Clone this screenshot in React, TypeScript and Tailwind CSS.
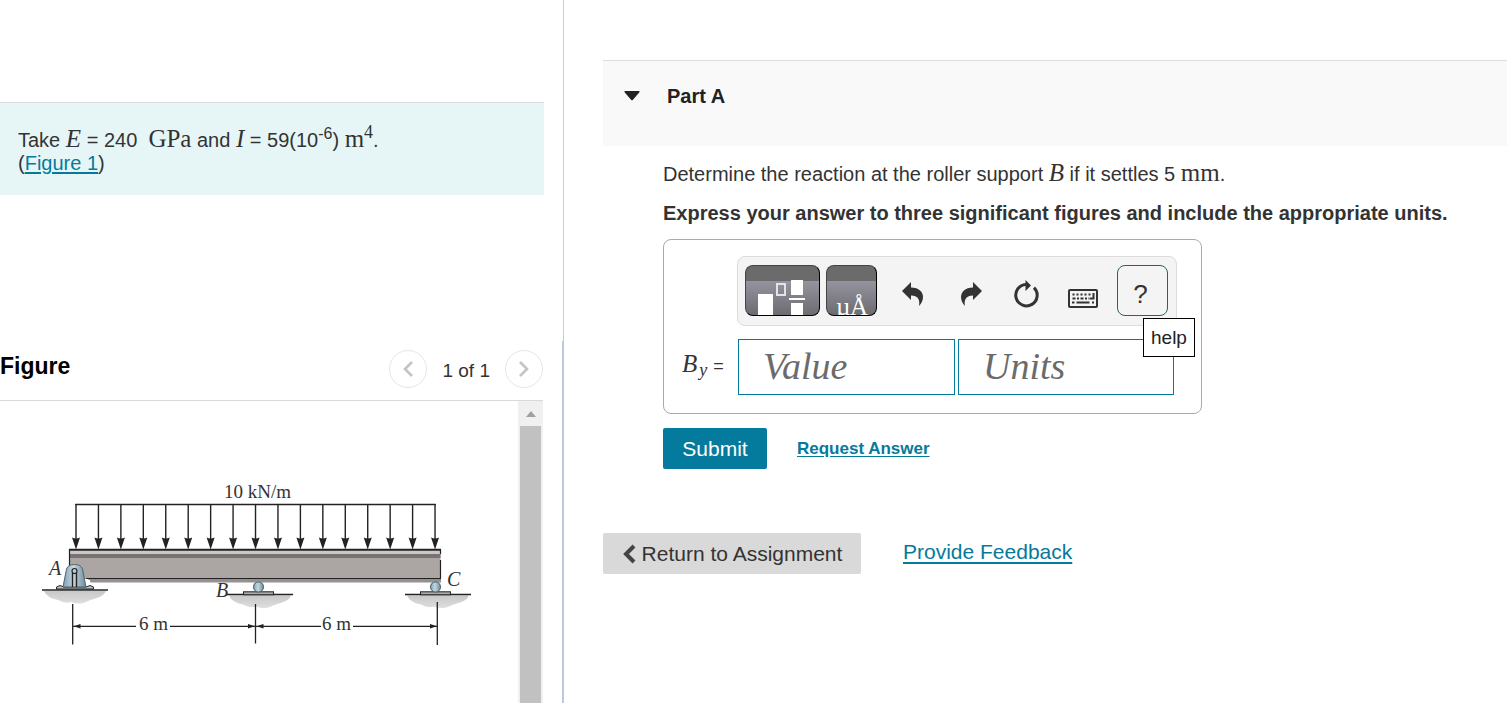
import type { ReactNode } from 'react';

const ARROWS = Array.from({ length: 17 }, (_, i) => 76 + i * 22.44);

function MathText({ children, italic = false }: { children: ReactNode; italic?: boolean }) {
  return (
    <span className={`font-['Liberation_Serif',serif] text-[25px] leading-none text-[#333] ${italic ? 'italic' : ''}`}>
      {children}
    </span>
  );
}

function Ground({ x, y }: { x: number; y: number }) {
  return (
    <g transform={`translate(${x} ${y})`}>
      <path d="M-31 1 L31 1 Q29 6 22 8 Q15 10 11 12 Q4 15 -4 12 Q-10 14 -17 10 Q-28 8 -31 1Z" fill="url(#soil)" />
      <path d="M-33 0H33" stroke="#222" strokeWidth="1.5" />
    </g>
  );
}

function Roller({ x }: { x: number }) {
  return (
    <g transform={`translate(${x} 587)`}>
      <rect x="-15" y="4.8" width="30" height="3" fill="#aaa" stroke="#222" />
      <rect x="-5" y="-5" width="10" height="9" rx="3" fill="#9fb8c6" />
      <circle r="5" fill="url(#steel)" stroke="#4f6470" />
    </g>
  );
}

function BeamFigure() {
  return (
    <svg
      viewBox="0 401 518 302"
      className="block h-[302px] w-[518px] shrink-0"
      role="img"
      aria-label="Beam ABC with a distributed load"
      fontFamily="'Liberation Serif', serif"
      fontSize="19"
      fill="#333"
    >
      <defs>
        <linearGradient id="steel" x1="0" x2="1">
          <stop offset="0" stopColor="#7f9fb2" />
          <stop offset=".45" stopColor="#c5d7e1" />
          <stop offset="1" stopColor="#6f8b9b" />
        </linearGradient>
        <linearGradient id="soil" x1="0" x2="0" y1="0" y2="1">
          <stop offset="0" stopColor="#c8c8c8" />
          <stop offset="1" stopColor="#dedede" />
        </linearGradient>
      </defs>

      {/* distributed load */}
      <text x="224" y="498">10 kN/m</text>
      <path d="M75.3 504.5H435.7" stroke="#222" strokeWidth="1.6" />
      {ARROWS.map(x => (
        <g key={x}>
          <path d={`M${x} 504V540`} stroke="#222" strokeWidth="1.4" />
          <path d={`M${x - 4} 537.5 Q${x} 539.5 ${x + 4} 537.5 L${x} 549.5Z`} fill="#222" />
        </g>
      ))}

      {/* beam */}
      <rect x="69.5" y="550" width="371" height="29" fill="#aba5a4" />
      <rect x="69.5" y="550" width="371" height="4" fill="#cdc6c6" />
      <rect x="69.5" y="554" width="371" height="4" fill="#787373" />
      <rect x="90" y="580" width="351" height="2.5" fill="#969191" />
      <path d="M69 549.8H441" stroke="#222" strokeWidth="2" />
      <path d="M86 578.8H441" stroke="#222" strokeWidth="1.6" />
      <path d="M69.5 549V566M440.5 549V554M440.5 560V579" stroke="#222" strokeWidth="1.2" />

      {/* supports */}
      <Ground x={75} y={590} />
      <Ground x={260} y={594.5} />
      <Ground x={438} y={594.5} />
      <path d="M84 579H88L94 587H86Z" fill="#fff" />
      <path d="M56.5 589V587L60 585.5L64 587H86L90 585.5L93.5 587V589Z" fill="#b9c5cb" stroke="#222" />
      <path d="M63 587 L66.5 569 Q68 564.5 74.5 564.5 Q81 564.5 82.5 569 L86 587Z" fill="url(#steel)" stroke="#4f6470" />
      <path d="M72.5 587V573M76.5 587V573" stroke="#222" strokeWidth="1.4" />
      <circle cx="74.5" cy="571" r="2.5" fill="#b7cbd6" stroke="#222" strokeWidth="1.2" />
      <Roller x={258.5} />
      <Roller x={435.5} />
      <g fontStyle="italic" fontSize="20">
        <text x="49" y="575">A</text>
        <text x="216" y="597">B</text>
        <text x="447" y="586">C</text>
      </g>

      {/* dimensions */}
      <path d="M72.7 604V644.5M255.5 604V643.5M437.3 602V645" stroke="#222" strokeWidth="1.3" />
      <path d="M73 626.3H136M170 626.3H255M256 626.3H321M353 626.3H437" stroke="#222" strokeWidth="1.2" />
      <path
        d="M73.5 626.3l7-2.2v4.4zM255 626.3l-7-2.2v4.4zM256.5 626.3l7-2.2v4.4zM437 626.3l-7-2.2v4.4z"
        fill="#222"
      />
      <text x="139" y="630">6 m</text>
      <text x="322" y="630">6 m</text>
    </svg>
  );
}

function PagerButton({ label, d }: { label: string; d: string }) {
  return (
    <button aria-label={label} className="flex size-[38px] items-center justify-center rounded-full border border-[#e6e6e6]">
      <svg width="12" height="18" viewBox="0 0 12 18" fill="none" stroke="#c4c4c4" strokeWidth="2.6">
        <path d={d} />
      </svg>
    </button>
  );
}

function ProblemPane() {
  return (
    <div className="flex flex-col">
      <section className="h-[341px] border-r border-[#c3cedb] pt-[102px] pr-[19px]">
        <div className="border-t border-[#d6dbdb] bg-[#e6f6f7] pt-[23px] pb-5 pl-[18px] text-[#333]">
          <p className="leading-[23px]">
            Take <MathText italic>E</MathText> = 240&nbsp; <MathText>GPa</MathText> and <MathText italic>I</MathText> = 59(10
            <sup className="text-base leading-none">-6</sup>) <MathText>m</MathText>
            <sup className="font-['Liberation_Serif',serif] text-lg leading-none">4</sup>.
            <br />
            (<a href="#figure" className="text-[#047a9c] underline underline-offset-2">Figure 1</a>)
          </p>
        </div>
      </section>

      <section id="figure" className="flex flex-1 flex-col border-r-2 border-[#b8cadc] pr-[19px]">
        <header className="flex h-[60px] items-center justify-between border-b border-[#d9d9d9] pb-1">
          <h2 className="pb-1 text-[23px] font-bold text-black">Figure</h2>
          <div className="flex items-center gap-[15px] text-[#333]">
            <PagerButton label="Previous figure" d="M10 2L3 9L10 16" />
            <span className="pt-1.5 text-[19px]">1 of 1</span>
            <PagerButton label="Next figure" d="M2 2L9 9L2 16" />
          </div>
        </header>
        <div className="flex flex-1 justify-between">
          <BeamFigure />
          <div className="flex w-[25px] shrink-0 flex-col items-center bg-[#f0f0f0]">
            <svg width="12" height="25" viewBox="0 0 12 25" className="shrink-0">
              <path d="M1 16L6 10L11 16Z" fill="#a0a0a0" />
            </svg>
            <div className="w-[21px] flex-1 bg-[#c1c1c1]" />
          </div>
        </div>
      </section>
    </div>
  );
}

const DARK_BUTTON =
  'h-[51px] overflow-hidden rounded-lg border border-t-[#444] border-l-[#444] border-r-black border-b-black bg-linear-to-b from-[#6b6b6b] from-30% via-[#9694a0] via-30% to-[#6c6c70]';

function TemplateButton() {
  return (
    <button aria-label="Templates" className={`w-[75px] ${DARK_BUTTON}`}>
      <svg width="73" height="49" viewBox="0 0 73 49" fill="#fff">
        <rect x="12" y="28" width="15" height="21" />
        <rect x="31" y="18" width="8" height="11" fill="none" stroke="#e4e4e4" strokeWidth="2" />
        <rect x="45" y="14" width="12" height="15" />
        <rect x="43" y="32" width="16" height="2" />
        <rect x="45" y="37" width="12" height="12" />
      </svg>
    </button>
  );
}

function SymbolButton() {
  return (
    <button aria-label="Symbols" className={`ml-[6px] w-[51px] ${DARK_BUTTON}`}>
      <svg width="49" height="49" viewBox="0 0 49 49" fill="#fff" fontFamily="'Liberation Serif', serif" fontSize="25">
        <text x="9" y="49">µ</text>
        <text x="23" y="49">Å</text>
      </svg>
    </button>
  );
}

function Toolbar() {
  return (
    <div className="flex h-[70px] w-[440px] items-start rounded-lg border border-[#dcdcdc] bg-[#f4f4f4] px-[7px] pt-2 text-[#333]">
      <TemplateButton />
      <SymbolButton />
      <button aria-label="Undo" className="mt-4 ml-6">
        <svg width="24" height="26" viewBox="0 0 24 26" fill="currentColor">
          <path d="M1 10L10 1V6.5C18 6.5 22 11 22 16C22 20 20 23 18 25C19 20 18 14.5 10 14.5V19Z" />
        </svg>
      </button>
      <button aria-label="Redo" className="mt-4 ml-[34px]">
        <svg width="24" height="26" viewBox="0 0 24 26" fill="currentColor">
          <path d="M23 10L14 1V6.5C6 6.5 2 11 2 16C2 20 4 23 6 25C5 20 6 14.5 14 14.5V19Z" />
        </svg>
      </button>
      <button aria-label="Reset" className="mt-[14px] ml-[30px]">
        <svg width="26" height="30" viewBox="0 0 26 30">
          <path d="M13 5.5A10.7 10.7 0 1 0 21 8.6" fill="none" stroke="currentColor" strokeWidth="3" />
          <path d="M12.5 1L18 6.5L12.5 12Z" fill="currentColor" />
        </svg>
      </button>
      <button aria-label="Keyboard" className="mt-6 ml-[29px]">
        <svg width="30" height="19" viewBox="0 0 30 19" fill="none" stroke="currentColor" strokeWidth="2">
          <rect x="1" y="1" width="28" height="17" rx="1" />
          <path d="M4.5 5.5H24" strokeDasharray="2 2" />
          <path d="M4.5 9.5H21" strokeDasharray="3 1.5 2 1.5" />
          <path d="M25.5 4V9.5H21.5" />
          <path d="M4 13.5H6.5M8.5 13.5H21.5M24 13.5H26" />
        </svg>
      </button>
      <div className="relative ml-[19px]">
        <button
          aria-describedby="help-tip"
          className="h-[51px] w-[51px] rounded-lg border border-[#1f646e] pt-2 pr-1 text-[26px]"
        >
          ?
        </button>
        <span
          id="help-tip"
          role="tooltip"
          className="absolute top-[53px] left-[26px] z-10 border border-black bg-white px-[7px] py-[6px] text-[19px] leading-[25px] text-[#222]"
        >
          help
        </span>
      </div>
    </div>
  );
}

const FIELD =
  "h-14 border border-[#047a9c] bg-white px-6 pb-0.5 font-['Liberation_Serif',serif] text-[38px] italic placeholder:text-[#6b6b6b] focus:outline-none";

function AnswerBox() {
  return (
    <div className="mt-[14px] h-[175px] w-[539px] rounded-lg border border-[#aaa] pt-4 pl-[18px]">
      <div className="pl-[55px]">
        <Toolbar />
      </div>
      <div className="mt-[13px] flex items-center">
        <label htmlFor="value" className="flex w-14 items-baseline pb-1 text-[#333]">
          <MathText italic>B</MathText>
          <sub className="ml-0.5 font-['Liberation_Serif',serif] text-lg leading-none italic">y</sub>
          <span className="ml-1.5 text-lg">=</span>
        </label>
        <input id="value" placeholder="Value" className={`w-[217px] ${FIELD}`} />
        <input aria-label="Units" placeholder="Units" className={`ml-[3px] w-[216px] ${FIELD}`} />
      </div>
    </div>
  );
}

export default function App() {
  return (
    <div className="grid min-h-screen grid-cols-[564px_1fr] bg-white font-['Liberation_Sans',Arial,sans-serif] text-xl">
      <ProblemPane />
      <main className="min-w-0 pt-[60px] pl-[39px] text-[#333]">
        <header className="flex h-[86px] items-center gap-[27px] border-t border-[#dcdcdc] bg-[#f9f9f9] pb-4 pl-[21px]">
          <button aria-label="Collapse Part A">
            <svg width="16" height="10" viewBox="0 0 16 10">
              <path d="M1.5 0H14.5Q16.5 0 15 1.8L9 8.8Q8 9.8 7 8.8L1 1.8Q-.5 0 1.5 0Z" fill="#222" />
            </svg>
          </button>
          <h1 className="font-bold text-[#222]">Part A</h1>
        </header>

        <div className="pl-[60px]">
          <p className="mt-[14px] leading-6">
            Determine the reaction at the roller support <MathText italic>B</MathText> if it settles 5 <MathText>mm</MathText>.
          </p>
          <p className="mt-[15px] leading-6 font-bold">
            Express your answer to three significant figures and include the appropriate units.
          </p>
          <AnswerBox />
          <div className="mt-[14px] flex items-center gap-[30px]">
            <button className="h-[41px] w-[104px] rounded-xs bg-[#047a9c] text-[21px] text-white">Submit</button>
            <a href="#answer" className="text-[17px] font-bold text-[#047a9c] underline underline-offset-2">
              Request Answer
            </a>
          </div>
        </div>

        <footer className="mt-16 flex items-center gap-[42px] text-[21px]">
          <button className="flex h-[41px] w-[258px] items-center justify-center gap-[6px] rounded-xs bg-[#d9d9d9]">
            <svg width="14" height="20" viewBox="0 0 14 20" fill="none" stroke="#444" strokeWidth="4">
              <path d="M12 2L4 10L12 18" />
            </svg>
            Return to Assignment
          </button>
          <a href="#feedback" className="pb-1 text-[#047a9c] underline decoration-2 underline-offset-3">
            Provide Feedback
          </a>
        </footer>
      </main>
    </div>
  );
}
